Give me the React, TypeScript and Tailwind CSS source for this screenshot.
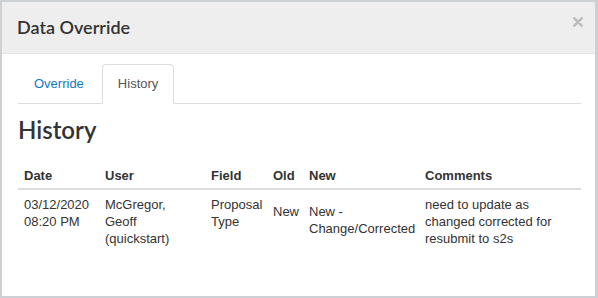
import React from "react";

const COLS = [
  { key: "date", label: "Date", width: "w-[82px] pl-[6px]" },
  { key: "user", label: "User", width: "w-[106px] pl-[5px]" },
  { key: "field", label: "Field", width: "w-[62px] pl-[5px]" },
  { key: "old", label: "Old", width: "w-[36px] pl-[5px]" },
  { key: "new", label: "New", width: "w-[116px] pl-[5px]" },
  { key: "comments", label: "Comments", width: "pl-[5px]" },
];

const ROWS = [
  {
    date: ["03/12/2020", "08:20 PM"],
    user: "McGregor, Geoff (quickstart)",
    field: "Proposal Type",
    old: "New",
    new: "New - Change/Corrected",
    comments: "need to update as changed corrected for resubmit to s2s",
  },
];

function CloseIcon() {
  return (
    <svg width="10" height="10" viewBox="0 0 10 10" fill="none">
      <path d="M1.3 1.3l7.4 7.4M8.7 1.3l-7.4 7.4" stroke="#bdbdbd" strokeWidth="2.6" strokeLinecap="round" />
    </svg>
  );
}

export default function App() {
  return (
    <div
      className="w-[598px] h-[298px] bg-white border-t-2 border-l-2 border-b-2 border-r-[3px] border-[#cdd1d5] flex flex-col text-[#333]"
      style={{ fontFamily: '"Liberation Sans", Arial, sans-serif' }}
    >
      {/* modal header */}
      <div className="h-[52px] shrink-0 bg-[#eeeeee] border-b border-[#e3e3e3] flex items-start pl-[15px] pr-3">
        <h4
          className="pt-[14px] text-[18px] leading-[22px] font-semibold text-[#333]"
          style={{ fontFamily: "Lato, sans-serif" }}
        >
          Data Override
        </h4>
        <button className="ml-auto mt-[15px]" aria-label="Close">
          <CloseIcon />
        </button>
      </div>

      {/* modal body */}
      <div className="pl-4 pr-[14px] pt-[10px]">
        <ul className="flex border-b border-[#dddddd] text-[13px] leading-[18px]">
          <li className="mr-[2px] -mb-px">
            <a className="block px-[15px] py-[10px] border border-transparent text-[#1477c8]">Override</a>
          </li>
          <li className="-mb-px">
            <a className="block px-[15px] py-[10px] border border-[#dddddd] border-b-white bg-white rounded-t-[4px] text-[#555]">
              History
            </a>
          </li>
        </ul>

        <h2
          className="mt-[12px] text-[24px] leading-[28px] font-semibold text-[#333]"
          style={{ fontFamily: "Lato, sans-serif" }}
        >
          History
        </h2>

        <table className="mt-[19px] w-full table-fixed text-[13px] leading-[17px]">
          <thead>
            <tr className="border-b-2 border-[#dddddd]">
              {COLS.map((c) => (
                <th key={c.key} className={`${c.width} pr-[5px] pt-[4px] pb-[4px] text-left font-bold`}>
                  {c.label}
                </th>
              ))}
            </tr>
          </thead>
          <tbody>
            {ROWS.map((r, i) => (
              <tr key={i} className="align-top">
                <td className="pl-[6px] pr-[5px] pt-[6px]">
                  {r.date.map((d) => (
                    <div key={d}>{d}</div>
                  ))}
                </td>
                <td className="pl-[5px] pr-[12px] pt-[6px]">{r.user}</td>
                <td className="px-[5px] pt-[6px]">{r.field}</td>
                <td className="px-[5px] pt-[13px]">{r.old}</td>
                <td className="px-[5px] pt-[13px]">{r.new}</td>
                <td className="px-[5px] pt-[6px]">{r.comments}</td>
              </tr>
            ))}
          </tbody>
        </table>
      </div>
    </div>
  );
}
